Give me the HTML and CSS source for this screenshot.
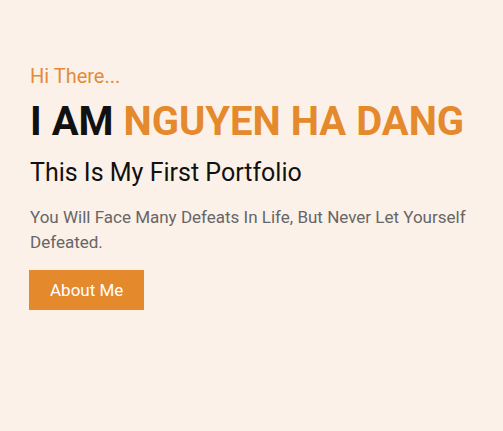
FILE: index.html
```html
<!DOCTYPE html>
<html>
<head>
<meta charset="utf-8">
<link rel="stylesheet" href="styles.css">
</head>
<body>
<section class="hero">
  <p class="greet">Hi There...</p>
  <h1 class="title">I AM <span class="accent">NGUYEN HA DANG</span></h1>
  <h2 class="subtitle">This Is My First Portfolio</h2>
  <p class="desc">You Will Face Many Defeats In Life, But Never Let Yourself Defeated.</p>
  <a class="btn" href="#">About Me</a>
</section>
</body>
</html>
```
FILE: styles.css
```css
html, body {
  margin: 0;
  padding: 0;
}
body {
  background: #fcf1e8;
  font-family: Roboto, "Liberation Sans", sans-serif;
  width: 503px;
  height: 431px;
  overflow: hidden;
}
.hero {
  padding: 64px 30px 0 30px;
  display: flex;
  flex-direction: column;
  align-items: flex-start;
}
.greet {
  margin: 0;
  color: #e38b3b;
  font-size: 20px;
  line-height: 24px;
}
.title {
  margin: 10px 0 0 0;
  font-size: 40px;
  font-weight: 700;
  line-height: 48px;
  color: #111;
}
.accent {
  color: #e5892d;
}
.subtitle {
  margin: 12px 0 0 0;
  font-size: 25px;
  font-weight: 400;
  line-height: 30px;
  color: #111;
}
.desc {
  margin: 17px 0 0 0;
  font-size: 17px;
  line-height: 24.5px;
  color: #666;
  max-width: 450px;
}
.btn {
  margin: 16px 0 0 -1px;
  display: inline-block;
  background: #e5892d;
  color: #fff;
  text-decoration: none;
  font-size: 17px;
  padding: 0 21px;
  height: 40px;
  line-height: 40px;
}
```
